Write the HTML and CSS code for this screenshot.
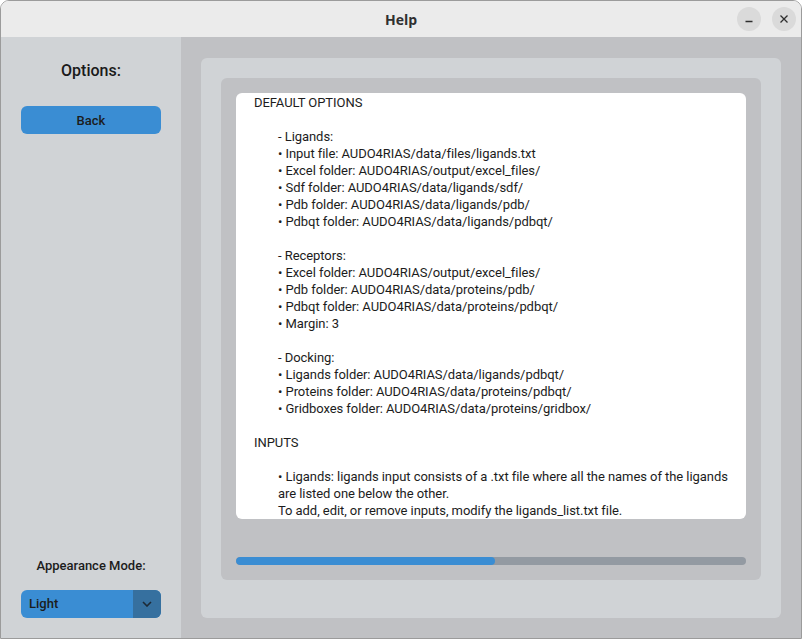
FILE: index.html
```html
<!DOCTYPE html>
<html>
<head>
<meta charset="utf-8">
<link rel="stylesheet" href="styles.css">
</head>
<body>
<div class="window">
  <div class="titlebar">
    <div></div>
    <div class="title">Help</div>
    <div class="controls">
      <span class="ctl"><svg width="10" height="10" viewBox="0 0 10 10"><line x1="1.5" y1="7.5" x2="8.5" y2="7.5" stroke="#2e2e2e" stroke-width="1.3"/></svg></span>
      <span class="ctl"><svg width="10" height="10" viewBox="0 0 10 10"><path d="M1.5 1.5 L8.5 8.5 M8.5 1.5 L1.5 8.5" stroke="#2e2e2e" stroke-width="1.3"/></svg></span>
    </div>
  </div>
  <div class="body">
    <aside class="sidebar">
      <div class="side-title">Options:</div>
      <button class="btn">Back</button>
      <div class="spacer"></div>
      <div class="mode-label">Appearance Mode:</div>
      <div class="option-menu">
        <span class="om-text">Light</span>
        <span class="om-arrow"><svg width="10" height="6" viewBox="0 0 10 6"><polyline points="1,1 5,5 9,1" fill="none" stroke="#1d2a36" stroke-width="1.6"/></svg></span>
      </div>
    </aside>
    <main class="main">
      <div class="outer">
        <div class="inner">
          <div class="textbox">
<div class="ln">DEFAULT OPTIONS</div>
<div class="ln"> </div>
<div class="ln ind">- Ligands:</div>
<div class="ln ind">• Input file: AUDO4RIAS/data/files/ligands.txt</div>
<div class="ln ind">• Excel folder: AUDO4RIAS/output/excel_files/</div>
<div class="ln ind">• Sdf folder: AUDO4RIAS/data/ligands/sdf/</div>
<div class="ln ind">• Pdb folder: AUDO4RIAS/data/ligands/pdb/</div>
<div class="ln ind">• Pdbqt folder: AUDO4RIAS/data/ligands/pdbqt/</div>
<div class="ln"> </div>
<div class="ln ind">- Receptors:</div>
<div class="ln ind">• Excel folder: AUDO4RIAS/output/excel_files/</div>
<div class="ln ind">• Pdb folder: AUDO4RIAS/data/proteins/pdb/</div>
<div class="ln ind">• Pdbqt folder: AUDO4RIAS/data/proteins/pdbqt/</div>
<div class="ln ind">• Margin: 3</div>
<div class="ln"> </div>
<div class="ln ind">- Docking:</div>
<div class="ln ind">• Ligands folder: AUDO4RIAS/data/ligands/pdbqt/</div>
<div class="ln ind">• Proteins folder: AUDO4RIAS/data/proteins/pdbqt/</div>
<div class="ln ind">• Gridboxes folder: AUDO4RIAS/data/proteins/gridbox/</div>
<div class="ln"> </div>
<div class="ln">INPUTS</div>
<div class="ln"> </div>
<div class="ln ind">• Ligands: ligands input consists of a .txt file where all the names of the ligands</div>
<div class="ln ind">are listed one below the other.</div>
<div class="ln ind">To add, edit, or remove inputs, modify the ligands_list.txt file.</div>
<div class="ln ind"> </div>
          </div>
          <div class="progress"><div class="fill" style="width: 50.8%"></div></div>
        </div>
      </div>
    </main>
  </div>
</div>
</body>
</html>
```
FILE: styles.css
```css
* { box-sizing: border-box; }
html, body { margin: 0; padding: 0; background: #ffffff; }
.window {
  width: 802px;
  height: 639px;
  border: 1px solid #9b9b9b;
  border-radius: 9px 9px 0 0;
  overflow: hidden;
  display: flex;
  flex-direction: column;
  font-family: Roboto, "Liberation Sans", sans-serif;
  color: #1c1c1c;
}
.titlebar {
  height: 36px;
  flex: none;
  background: #ebebeb;
  display: grid;
  grid-template-columns: 1fr auto 1fr;
  align-items: center;
}
.title {
  font-family: "Open Sans", "DejaVu Sans", sans-serif;
  font-weight: 700;
  font-size: 14px;
  color: #2f2f2f;
}
.controls {
  display: flex;
  justify-content: flex-end;
  gap: 11px;
  padding-right: 5px;
}
.ctl {
  width: 24px;
  height: 24px;
  border-radius: 50%;
  background: #dadada;
  display: flex;
  align-items: center;
  justify-content: center;
}
.body {
  flex: 1;
  display: flex;
  min-height: 0;
}
.sidebar {
  width: 180px;
  flex: none;
  background: #d0d3d6;
  display: flex;
  flex-direction: column;
  align-items: center;
  padding: 23px 20px 20px;
}
.side-title {
  font-size: 16px;
  font-weight: 500;
  line-height: 22px;
  color: #1a1a1a;
}
.btn {
  margin-top: 24px;
  width: 140px;
  height: 28px;
  border: none;
  border-radius: 6px;
  background: #3a8dd3;
  color: #1c1c1c;
  font-family: Roboto, "Liberation Sans", sans-serif;
  font-size: 13px;
  font-weight: 500;
  padding: 0;
}
.spacer { flex: 1; }
.mode-label {
  font-size: 13px;
  font-weight: 500;
  line-height: 17px;
  margin-bottom: 16px;
  color: #1c1c1c;
}
.option-menu {
  width: 140px;
  height: 28px;
  border-radius: 6px;
  background: #3a8dd3;
  display: flex;
  overflow: hidden;
}
.om-text {
  flex: 1;
  padding-left: 8px;
  font-size: 13px;
  font-weight: 500;
  line-height: 28px;
}
.om-arrow {
  width: 28px;
  background: #36709f;
  display: flex;
  align-items: center;
  justify-content: center;
}
.main {
  flex: 1;
  background: #c0c1c4;
  padding: 21px 20px 20px 20px;
}
.outer {
  height: 100%;
  background: #d0d3d6;
  border-radius: 6px;
  padding: 20px 20px 38px;
}
.inner {
  height: 100%;
  background: #c0c1c4;
  border-radius: 6px;
  padding: 15px;
  display: flex;
  flex-direction: column;
}
.textbox {
  height: 426px;
  flex: none;
  background: #ffffff;
  border-radius: 6px;
  padding: 1px 10px 0 18px;
  overflow: hidden;
  font-size: 13px;
  line-height: 17px;
  letter-spacing: -0.06px;
  color: #1c1c1c;
}
.ln { white-space: pre; height: 17px; }
.ind { padding-left: 24px; }
.progress {
  margin-top: 38px;
  height: 8px;
  border-radius: 4px;
  background: #939aa2;
  overflow: hidden;
}
.fill {
  height: 100%;
  background: #3a8dd3;
  border-radius: 4px;
}
```
